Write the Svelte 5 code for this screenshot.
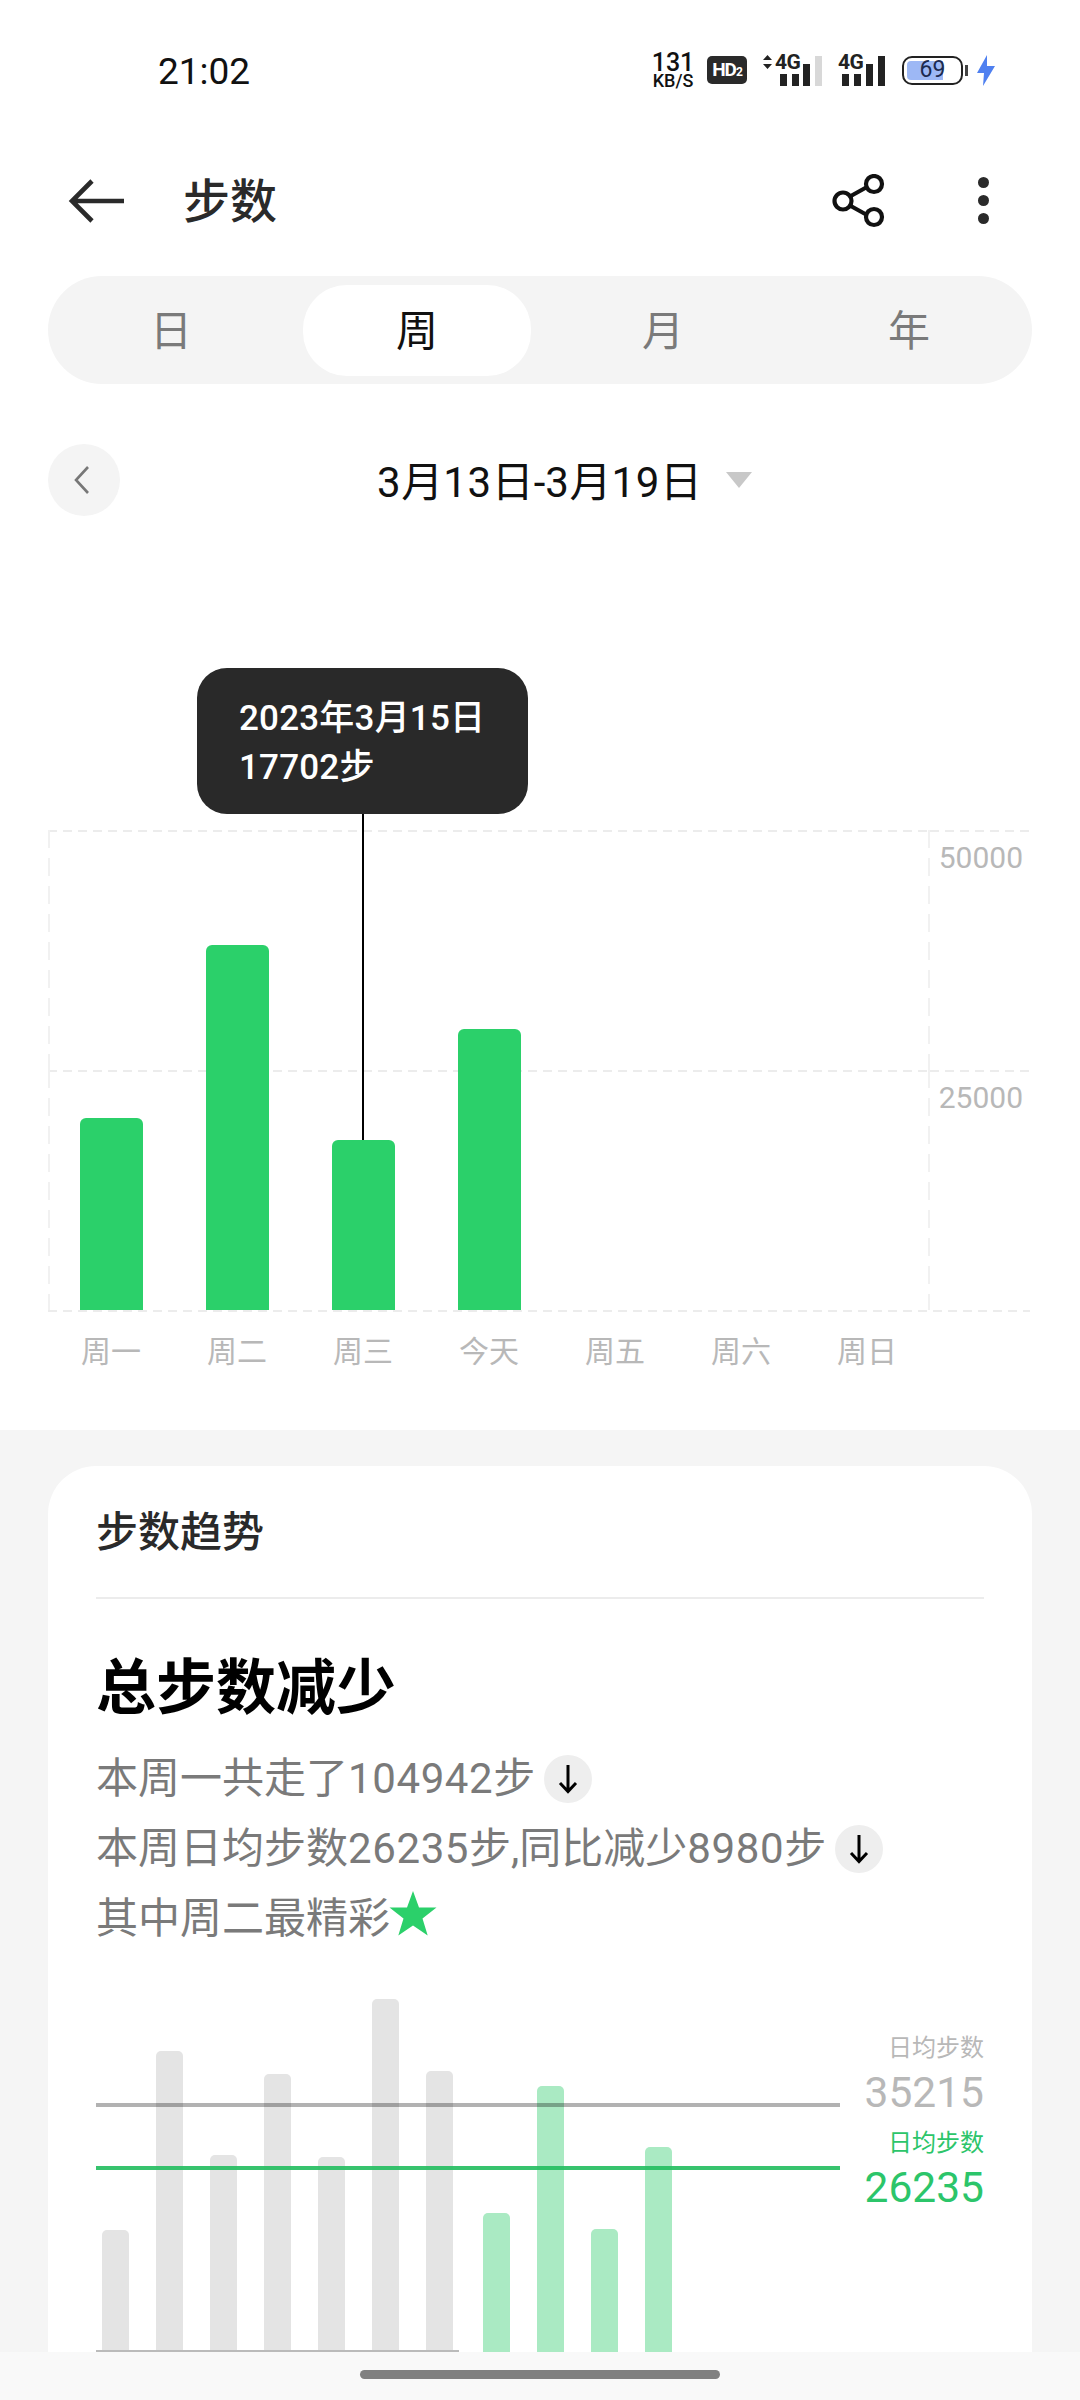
<script>
  const tabs = ['日', '周', '月', '年'];
  const days = ['周一', '周二', '周三', '今天', '周五', '周六', '周日'];
  // height of each bar above the chart baseline, in px
  const weekBars = [192, 365, 170, 281];
  const lastWeek = [120, 299, 195, 276, 193, 351, 279];
  const thisWeek = [139, 266, 123, 205];
</script>

<div class="page">
  <div class="status">
    <span class="time">21:02</span>
    <div class="status-right">
      <div class="speed"><b>131</b><span>KB/S</span></div>
      <div class="hd">HD<small>2</small></div>
      <div class="sim first">
        <svg class="updown" viewBox="0 0 10 16" width="11" height="16"><path d="M5 1l4.500 5H.5zM5 15l4.500-5H.5z" fill="#222" /></svg>
        <span class="net">4G</span>
        <svg class="bars" viewBox="0 0 44 32" width="44" height="32">
          <rect x="2" y="20" width="7" height="12" fill="#222" />
          <rect x="14" y="20" width="7" height="12" fill="#222" />
          <rect x="25" y="10" width="7" height="22" fill="#222" />
          <rect x="37" y="2" width="7" height="30" fill="#d8d8d8" />
        </svg>
      </div>
      <div class="sim second">
        <span class="net">4G</span>
        <svg class="bars" viewBox="0 0 44 32" width="44" height="32">
          <rect x="1" y="20" width="7" height="12" fill="#222" />
          <rect x="13" y="20" width="7" height="12" fill="#222" />
          <rect x="25" y="10" width="7" height="22" fill="#222" />
          <rect x="37" y="2" width="7" height="30" fill="#222" />
        </svg>
      </div>
      <div class="battery"><div class="level"></div><span>69</span></div>
      <div class="nub"></div>
      <svg class="bolt" viewBox="0 0 20 31" width="20" height="31"><path d="M11 0L1 18h7l-1 13L19 11h-8z" fill="#4f80f0" /></svg>
    </div>
  </div>

  <header>
    <svg class="back" viewBox="0 0 60 48" width="60" height="48">
      <path d="M25 4L5 24l20 20M5 24h52" fill="none" stroke="#2a2a2a" stroke-width="4.6" />
    </svg>
    <h1>步数</h1>
    <svg class="share" viewBox="0 0 56 54" width="56" height="54">
      <g fill="none" stroke="#111" stroke-width="4.2">
        <path d="M17 23l18-10M17 31l18 10" />
        <circle cx="11" cy="27" r="8.5" />
        <circle cx="42" cy="10" r="8" />
        <circle cx="42" cy="43" r="8" />
      </g>
    </svg>
    <div class="more"><i></i><i></i><i></i></div>
  </header>

  <div class="tabs">
    {#each tabs as tab, i}
      <div class="tab" class:active={i === 1}><span>{tab}</span></div>
    {/each}
  </div>

  <div class="date-row">
    <div class="prev">
      <svg viewBox="0 0 18 28" width="18" height="28"><path d="M15 1L3 14l12 13" fill="none" stroke="#777" stroke-width="2.6" /></svg>
    </div>
    <span class="range"><span class="n">3</span>月<span class="n">13</span>日-<span class="n">3</span>月<span class="n">19</span>日</span>
    <div class="caret"></div>
  </div>

  <div class="chart">
    <div class="grid">
      <div class="cell line-left"></div>
      <div class="cell value">50000</div>
      <div class="cell line-left"></div>
      <div class="cell value">25000</div>
    </div>
    <div class="week-bars">
      {#each weekBars as h}
        <div class="bar" style="height: {h}px"></div>
      {/each}
    </div>
    <div class="tooltip">2023年3月15日<br />17702步</div>
    <div class="pointer"></div>
  </div>
  <div class="days">
    {#each days as d}
      <span>{d}</span>
    {/each}
  </div>

  <section class="bottom">
    <div class="card">
      <div class="card-title">步数趋势</div>
      <h2>总步数减少</h2>
      <div class="desc">
        <p>本周一共走了<span class="n">104942</span>步<span class="chip"><svg viewBox="0 0 22 30" width="22" height="30"><path d="M11 1v27M3 19l8 8.500 8-8.500" fill="none" stroke="#000" stroke-width="3" /></svg></span></p>
        <p>本周日均步数<span class="n">26235</span>步,同比减少<span class="n">8980</span>步<span class="chip"><svg viewBox="0 0 22 30" width="22" height="30"><path d="M11 1v27M3 19l8 8.500 8-8.500" fill="none" stroke="#000" stroke-width="3" /></svg></span></p>
        <p>其中周二最精彩<svg class="star" viewBox="0 0 48 46" width="48" height="46"><path d="M24 1l6 16.500h17.500l-14 11 5.200 17L24 35.500 9.300 45.500l5.200-17-14-11H18z" fill="#2bd06a" /></svg></p>
      </div>
      <div class="trend">
        <div class="trend-bars">
          <div class="group old">
            {#each lastWeek as h}
              <div class="mini" style="height: {h}px"></div>
            {/each}
          </div>
          <div class="group now">
            {#each thisWeek as h}
              <div class="mini" style="height: {h}px"></div>
            {/each}
          </div>
          <div class="avg avg-old"></div>
          <div class="avg avg-now"></div>
        </div>
        <div class="legend">
          <span class="lab">日均步数</span>
          <span class="num">35215</span>
          <span class="lab green second-lab">日均步数</span>
          <span class="num green">26235</span>
        </div>
      </div>
    </div>
  </section>

  <div class="navbar"><div class="handle"></div></div>
</div>

<style>
  :global(body) {
    margin: 0;
    background: #fff;
  }

  .page {
    position: relative;
    width: 1080px;
    height: 2400px;
    overflow: hidden;
    background: #fff;
    color: #222;
    font-family: Roboto, "Noto Sans CJK SC", sans-serif;
  }

  .n {
    letter-spacing: 0.6px;
  }

  /* status bar */
  .status {
    height: 140px;
    display: flex;
    align-items: center;
    justify-content: space-between;
    padding: 0 84px 0 158px;
    box-sizing: border-box;
  }

  .time {
    font-size: 37px;
    color: #111;
    padding-top: 3px;
  }

  .status-right {
    display: flex;
    align-items: center;
    height: 40px;
  }

  .speed {
    display: flex;
    flex-direction: column;
    align-items: center;
    width: 42px;
    line-height: 1;
    color: #111;
  }

  .speed b {
    font-size: 25px;
    font-weight: 500;
    line-height: 22px;
  }

  .speed span {
    font-size: 18px;
    font-weight: 500;
    line-height: 14px;
    white-space: nowrap;
  }

  .hd {
    margin-left: 13px;
    width: 40px;
    height: 28px;
    border-radius: 5px;
    background: #2a2a2a;
    color: #fff;
    font-size: 19px;
    font-weight: 700;
    line-height: 28px;
    text-align: center;
    letter-spacing: -1px;
  }

  .hd small {
    font-size: 12px;
  }

  .sim {
    position: relative;
    height: 32px;
    width: 60px;
  }

  .sim.first {
    margin-left: 15px;
  }

  .sim.second {
    margin-left: 16px;
    width: 47px;
  }

  .updown {
    position: absolute;
    left: 0;
    top: 0;
  }

  .net {
    position: absolute;
    top: -2px;
    left: 13px;
    font-size: 21px;
    font-weight: 700;
    letter-spacing: -0.5px;
    line-height: 20px;
    color: #222;
  }

  .second .net {
    left: 0;
  }

  .bars {
    position: absolute;
    right: 0;
    top: 0;
  }

  .battery {
    position: relative;
    margin-left: 17px;
    width: 61px;
    height: 29px;
    box-sizing: border-box;
    border: 2.500px solid #222;
    border-radius: 10px;
    overflow: hidden;
    text-align: center;
  }

  .level {
    position: absolute;
    left: 3px;
    top: 3px;
    bottom: 3px;
    width: 36px;
    border-radius: 4px 0 0 4px;
    background: #9db8f5;
  }

  .battery span {
    position: relative;
    font-size: 23px;
    line-height: 24px;
    color: #1c2a50;
    display: block;
  }

  .nub {
    width: 3px;
    height: 11px;
    margin-left: 2px;
    background: #444;
  }

  .bolt {
    margin-left: 8px;
  }

  /* title row */
  header {
    position: relative;
    height: 120px;
    display: flex;
    align-items: center;
    padding: 0 0 0 67px;
  }

  .back {
    margin-top: 2px;
  }

  h1 {
    margin: 3px 0 0 56px;
    font-size: 47px;
    font-weight: 500;
    color: #2a2a2a;
    line-height: 60px;
  }

  .share {
    position: absolute;
    left: 832px;
    top: 34px;
  }

  .more {
    position: absolute;
    left: 978px;
    top: 37px;
    display: flex;
    flex-direction: column;
    gap: 7px;
  }

  .more i {
    width: 11px;
    height: 11px;
    border-radius: 50%;
    background: #2a2a2a;
  }

  /* day / week / month / year */
  .tabs {
    margin: 16px 48px 0;
    height: 108px;
    border-radius: 54px;
    background: #f4f4f4;
    display: grid;
    grid-template-columns: repeat(4, 1fr);
    align-items: center;
  }

  .tab {
    height: 91px;
    margin: 0 9px;
    border-radius: 44px;
    display: flex;
    align-items: center;
    justify-content: center;
    padding-bottom: 5px;
    box-sizing: border-box;
    font-size: 42px;
    color: #7a7a7a;
  }

  .tab.active {
    background: #fff;
    color: #111;
  }

  .date-row {
    position: relative;
    margin: 60px 48px 0;
    height: 72px;
    display: flex;
    align-items: center;
  }

  .prev {
    width: 72px;
    height: 72px;
    border-radius: 50%;
    background: #f4f4f4;
    display: flex;
    align-items: center;
    justify-content: center;
    margin-right: 257px;
  }

  .prev svg {
    margin-left: -4px;
  }

  .range {
    font-size: 42px;
    color: #111;
    line-height: 72px;
    padding-top: 5px;
  }

  .caret {
    margin-left: 24px;
    width: 0;
    height: 0;
    border-left: 13px solid transparent;
    border-right: 13px solid transparent;
    border-top: 16px solid #c8c8c8;
  }

  /* weekly chart */
  .chart {
    position: relative;
    margin: 314px 50px 0 48px;
    width: 982px;
    height: 482px;
  }

  .grid {
    display: grid;
    grid-template-columns: 882px 100px;
    grid-template-rows: 240px 240px;
    background: repeating-linear-gradient(90deg, #ececec 0 9px, transparent 9px 15px) bottom left / 100% 2px no-repeat;
    height: 482px;
  }

  .cell {
    background: repeating-linear-gradient(90deg, #ececec 0 9px, transparent 9px 15px) top left / 100% 2px no-repeat;
  }

  .line-left {
    position: relative;
  }

  .line-left::before,
  .line-left::after {
    content: "";
    position: absolute;
    top: 0;
    bottom: 0;
    width: 2px;
    background: repeating-linear-gradient(180deg, #f1f1f1 0 18px, transparent 18px 28px);
  }

  .line-left::before {
    left: 0;
  }

  .line-left::after {
    right: 0;
  }

  .value {
    font-size: 30px;
    line-height: 36px;
    padding: 10px 7px 0 0;
    text-align: right;
    color: #b8b8b8;
    box-sizing: border-box;
  }

  .week-bars {
    position: absolute;
    left: 32px;
    bottom: 2px;
    display: flex;
    align-items: flex-end;
    gap: 63px;
  }

  .bar {
    width: 63px;
    border-radius: 6px 6px 0 0;
    background: #2bd06a;
  }

  .tooltip {
    position: absolute;
    left: 149px;
    top: -162px;
    width: 331px;
    height: 146px;
    box-sizing: border-box;
    padding: 26px 0 0 42px;
    border-radius: 30px;
    background: #292929;
    color: #fff;
    font-size: 35px;
    font-weight: 500;
    line-height: 49px;
    letter-spacing: 0.2px;
  }

  .pointer {
    position: absolute;
    left: 314px;
    top: -16px;
    width: 2px;
    height: 326px;
    background: #000;
  }

  .days {
    margin: 0 48px;
    padding-top: 22px;
    height: 118px;
    box-sizing: border-box;
    display: flex;
    font-size: 30px;
    line-height: 36px;
    color: #b8b8b8;
  }

  .days span {
    width: 126px;
    text-align: center;
  }

  /* trend card */
  .bottom {
    background: #f5f5f5;
    padding: 36px 48px 0;
    height: 970px;
    box-sizing: border-box;
  }

  .card {
    background: #fff;
    border-radius: 48px 48px 0 0;
    padding: 0 48px;
    height: 1000px;
  }

  .card-title {
    height: 131px;
    line-height: 134px;
    font-size: 42px;
    font-weight: 500;
    color: #2a2a2a;
    border-bottom: 2px solid #ececec;
  }

  h2 {
    margin: 50px 0 0;
    font-size: 60px;
    font-weight: 700;
    line-height: 80px;
    color: #000;
  }

  .desc {
    margin-top: 15px;
    font-size: 42px;
    line-height: 70px;
    color: #7a7a7a;
  }

  .desc p {
    margin: 0;
    height: 70px;
    display: flex;
    align-items: center;
    white-space: pre;
  }

  .chip {
    margin-left: 9px;
    width: 48px;
    height: 48px;
    border-radius: 50%;
    background: #eee;
    display: inline-flex;
    align-items: center;
    justify-content: center;
  }

  .star {
    margin-left: -1px;
    margin-top: -12px;
  }

  .trend {
    margin-top: 27px;
    height: 371px;
    display: flex;
  }

  .trend-bars {
    position: relative;
    width: 744px;
    height: 371px;
    display: flex;
    align-items: flex-end;
  }

  .group {
    display: flex;
    align-items: flex-end;
    gap: 27px;
  }

  .old {
    width: 363px;
    box-sizing: border-box;
    padding-left: 6px;
    border-bottom: 2px solid #bbb;
  }

  .now {
    margin-left: 24px;
  }

  .mini {
    width: 27px;
    border-radius: 5px 5px 0 0;
  }

  .old .mini {
    background: #e4e4e4;
  }

  .now .mini {
    background: #aaeac3;
  }

  .avg {
    position: absolute;
    left: 0;
    right: 0;
    height: 4px;
  }

  .avg-old {
    top: 122px;
    background: rgba(0, 0, 0, 0.3);
  }

  .avg-now {
    top: 185px;
    background: rgba(38, 190, 98, 0.92);
  }

  .legend {
    flex: 1;
    display: flex;
    flex-direction: column;
    align-items: flex-end;
    padding-top: 49px;
    color: #b8b8b8;
  }

  .lab {
    font-size: 24px;
    line-height: 36px;
  }

  .num {
    margin-top: 2px;
    font-size: 42.5px;
    line-height: 50px;
  }

  .second-lab {
    margin-top: 7px;
  }

  .green {
    color: #2cc56a;
  }

  /* gesture bar */
  .navbar {
    position: absolute;
    left: 0;
    right: 0;
    bottom: 0;
    height: 48px;
    background: #f9f9f9;
    display: flex;
    justify-content: center;
    padding-top: 18px;
    box-sizing: border-box;
  }

  .handle {
    width: 360px;
    height: 9px;
    border-radius: 5px;
    background: #808080;
  }
</style>
